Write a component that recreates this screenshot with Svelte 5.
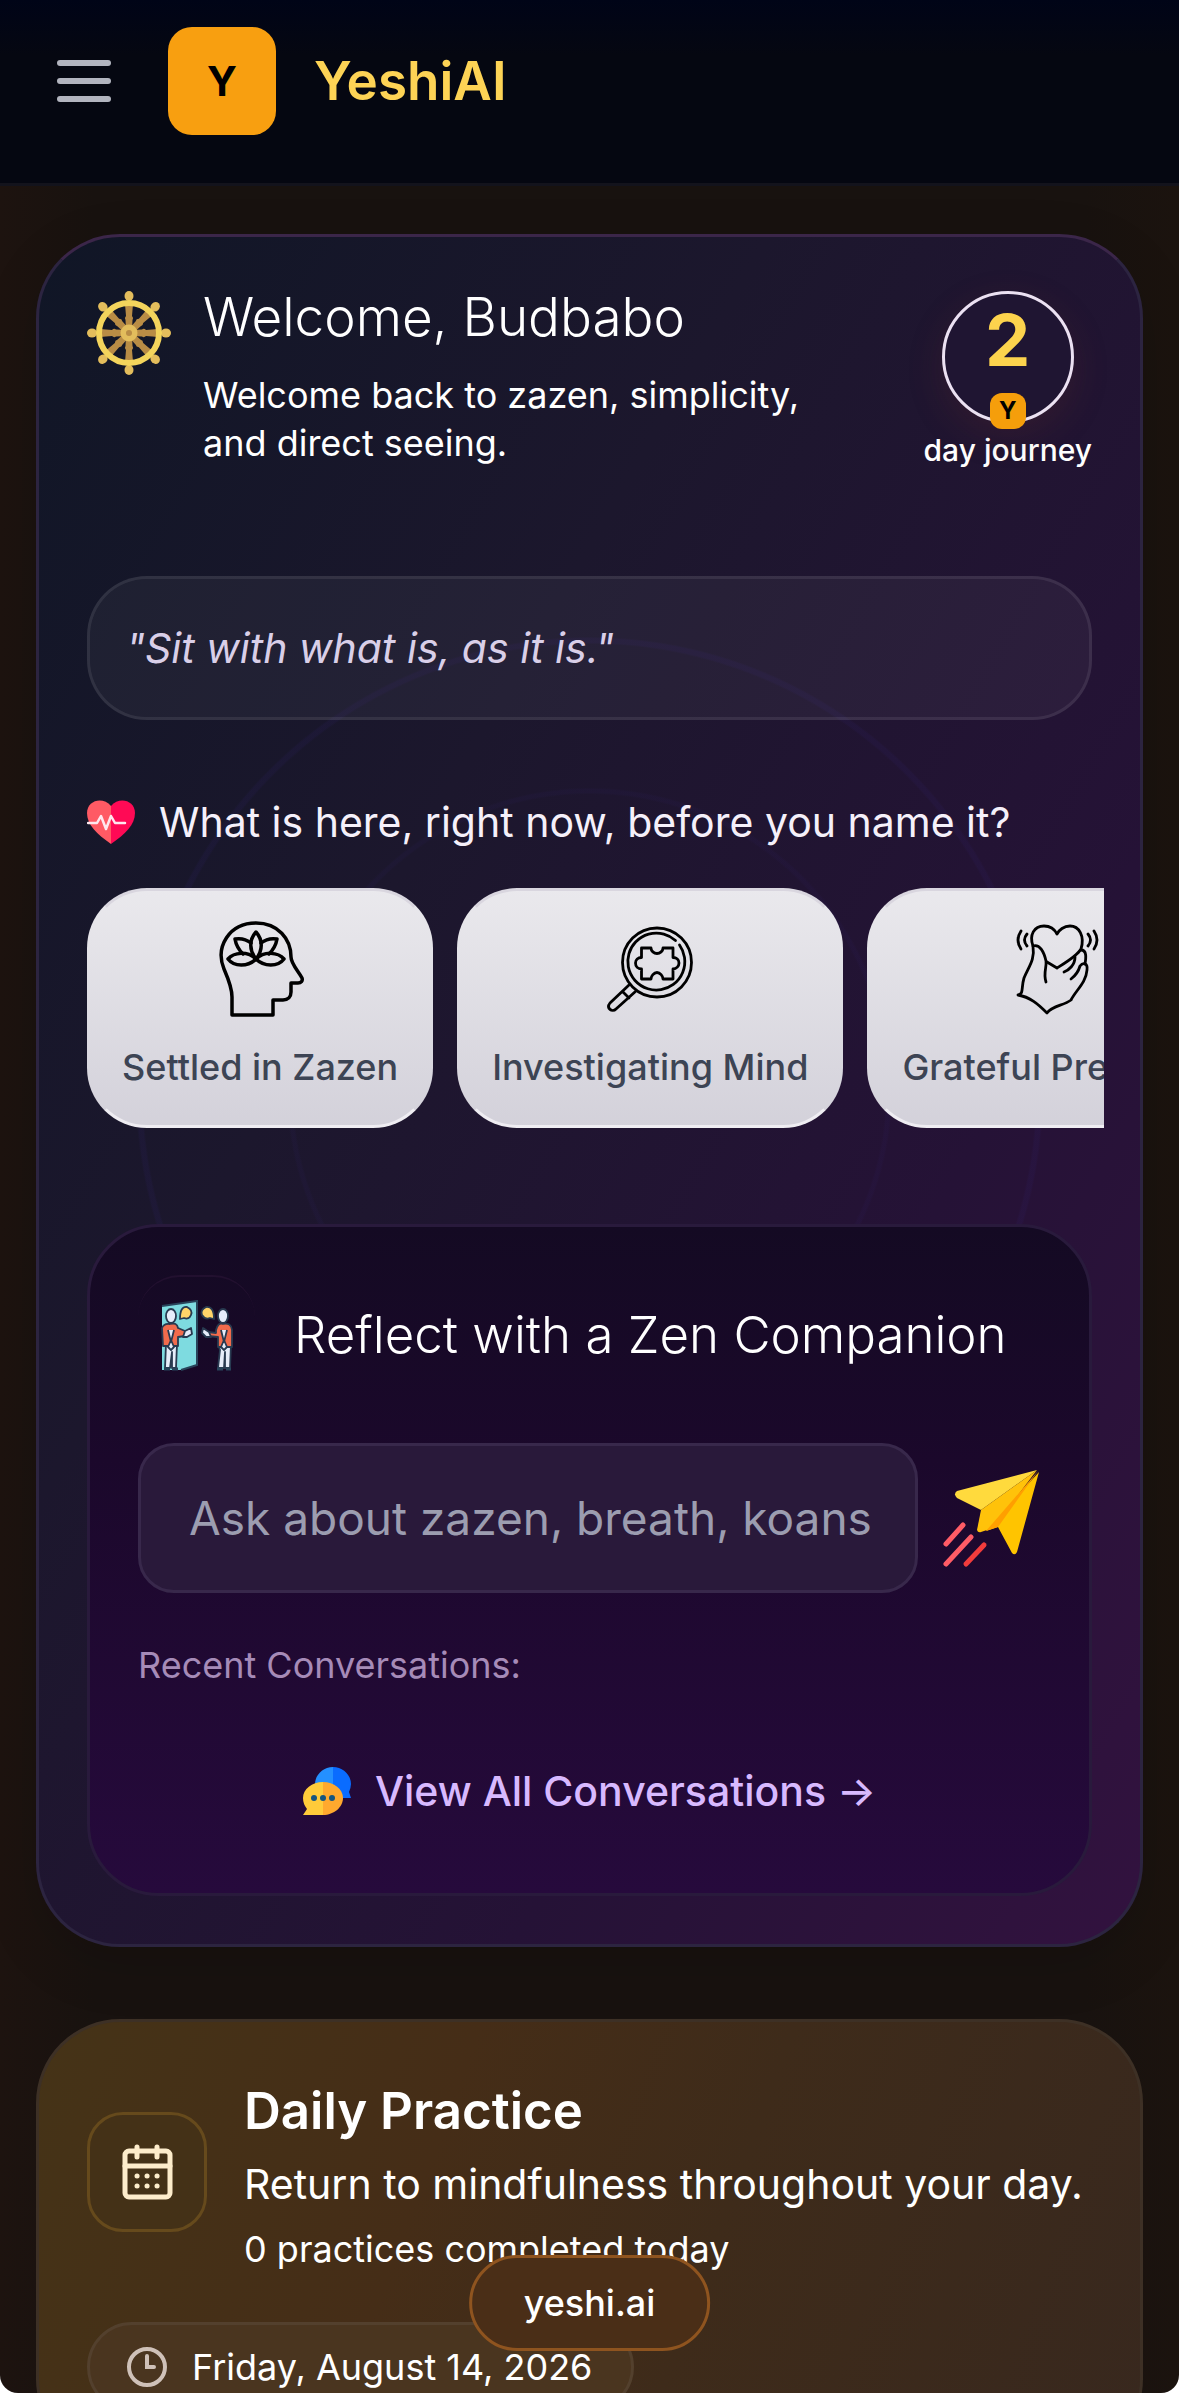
<script>
  let question = $state('');
  const spokes = [0, 45, 90, 135, 180, 225, 270, 315];
  const moods = [
    { label: 'Settled in Zazen', icon: 'head' },
    { label: 'Investigating Mind', icon: 'search' },
    { label: 'Grateful Presence', icon: 'heart' }
  ];
</script>

<div class="app">
  <header>
    <button class="menu" aria-label="Open menu"><span></span><span></span><span></span></button>
    <a class="brand" href="#home"><span class="logo">Y</span><span class="name">YeshiAI</span></a>
  </header>

  <main>
    <section class="card welcome">
      <div class="intro">
        <svg class="wheel" viewBox="0 0 84 84" aria-hidden="true">
          {#each spokes as angle}
            <g transform="rotate({angle} 42 42)">
              <path d="M39 39L38.500 29Q37 27 39 25L38 13H46L45 25Q47 27 45.500 29L45 39Z" fill="#b98c45" />
              <ellipse cx="42" cy="5" rx="4.500" ry="5" fill="#e3bd5c" />
            </g>
          {/each}
          <circle cx="42" cy="42" r="30" fill="none" stroke="#f3d45c" stroke-width="6" />
          <circle cx="42" cy="42" r="8.500" fill="#e3bd5c" />
          <circle cx="42" cy="42" r="3" fill="#b98c45" />
        </svg>
        <div class="greeting">
          <h1>Welcome, Budbabo</h1>
          <p>Welcome back to zazen, simplicity,<br />and direct seeing.</p>
        </div>
        <div class="journey">
          <div class="ring"><strong>2</strong><span class="badge">Y</span></div>
          <span class="days">day journey</span>
        </div>
      </div>

      <blockquote>"Sit with what is, as it is."</blockquote>

      <h2 class="ask">
        <svg viewBox="0 0 48 48" aria-hidden="true">
          <path d="M24 46C10 36 0 27 0 15C0 2 16-2 24 8Z" fill="#ff5a64" />
          <path d="M24 46C38 36 48 27 48 15C48 2 32-2 24 8Z" fill="#ff0a55" />
          <path d="M1 25H10L14 18L19 31L24 18L28 25H38" fill="none" stroke="#ffe8ee" stroke-width="2.500" stroke-linejoin="round" stroke-linecap="round" />
        </svg>
        What is here, right now, before you name it?
      </h2>

      <div class="moods">
        {#each moods as mood}
          <button class="mood">
            <svg viewBox="0 0 96 96" aria-hidden="true">
              {#if mood.icon === 'head'}
                <g stroke-width="3.500">
                  <path d="M20 94V76C20 66 15 55 12 48C3 26 17 2 44 2C66 2 79 18 79 36C79 43 87 51 90 57C91 60 89 62 86 62H79V71C79 76 76 79 71 79H61V94Z" />
                  <path d="M44 38C37 29 37 19 44 11C51 19 51 29 44 38Z" />
                  <path d="M39 22C34 18 29 17 23 18C24 24 27 29 31 33M49 22C54 18 59 17 65 18C64 24 61 29 57 33" />
                  <path d="M44 38C36 30 22 31 16 38C22 46 36 46 44 38ZM44 38C52 30 66 31 72 38C66 46 52 46 44 38Z" />
                </g>
              {:else if mood.icon === 'search'}
                <g stroke-width="2.800">
                  <circle cx="55" cy="41.500" r="34.500" />
                  <path d="M73.500 19.500A28.500 28.500 0 1 0 77.500 24" />
                  <path d="M39.500 27H49C49 30 52 32.500 55 32.500S61 30 61 27H71V36.500C74.500 36.500 77 39 77 42S74.500 48 71 48V58H61C61 55 58 51.500 55 51.500S49 55 49 58H39.500V48C36 48 33.500 45.500 33.500 42S36 36.500 39.500 36.500Z" />
                  <path d="M27 64L8 82C4 87 10 92 14 88L34 70M21 71L27 77" />
                </g>
              {:else}
                <g stroke-width="2.800">
                  <path d="M24 25C20 14 25 5 35 5C42 5 46 9 48 13C50 9 55 5 61 5C70 5 76 15 72 28C68 35 56 42 48 47L38 41" />
                  <path d="M37 61C34 52 38 46 37 40C35 31 31 23 24 25C26 39 20 45 15 57C12 67 15 73 9 74C21 76 29 83 38 92C44 84 54 85 62 79C67 69 77 62 78 49C79 42 74 41 71 45C69 52 66 55 62 58" />
                  <path d="M72 29C78 29 77 37 76 43M66 36C66 44 60 49 55 51" />
                  <path d="M12 10Q6 19 12 28M18 13Q13 19 18 25M79 13Q84 19 79 25M85 10Q91 19 85 28" />
                </g>
              {/if}
            </svg>
            {mood.label}
          </button>
        {/each}
      </div>

      <section class="companion">
        <div class="companion-head">
          <span class="tile">
            <svg viewBox="0 0 72 72" aria-hidden="true">
              <path d="M1 6L36 1V65L20 70H1Z" fill="#7edbe0" />
              <path d="M1 6L36 1V65L20 70" fill="none" stroke="#28435a" stroke-width="2" />
              <g stroke="#283a50" stroke-width="1.800" stroke-linejoin="round">
                <path d="M5 44H16L15 68H11V52L9 68H4Z" fill="#e6edfa" />
                <path d="M1 28Q3 23 9 24Q16 22 17 28L24 31V36L17 37V46H2Z" fill="#f16b4c" />
                <path d="M24 31L30 28L31 34L26 37H22Z" fill="#e6edfa" />
                <path d="M7 30L10 42L13 30M10 40L7 47L10 50L13 47Z" fill="#e6edfa" />
                <ellipse cx="10" cy="16" rx="5" ry="7" fill="#e6edfa" />
                <path d="M19 19Q19 6 26 7Q32 10 30 15Q28 20 23 18Z" fill="#ffd469" />
                <path d="M57 44H70L69 68H64V52L63 68H57L59 50Z" fill="#e6edfa" />
                <path d="M55 30Q57 22 62 24Q70 22 71 30V47H57V37L47 36V32L55 33Z" fill="#f16b4c" />
                <path d="M48 32L42 28L41 33L45 37H50Z" fill="#e6edfa" />
                <path d="M60 30L63 42L66 30M63 40L60 47L63 50L66 47Z" fill="#e6edfa" />
                <ellipse cx="62" cy="16" rx="5" ry="7" fill="#e6edfa" />
                <path d="M53 19Q53 6 45 7Q39 10 41 15Q44 20 49 18Z" fill="#ffd469" />
              </g>
              <path d="M3 69H9M11 69H17M56 69H62M65 69H70" stroke="#28435a" stroke-width="3" />
            </svg>
          </span>
          <h2>Reflect with a Zen Companion</h2>
        </div>

        <form class="prompt" onsubmit={(e) => e.preventDefault()}>
          <input type="text" aria-label="Your question" placeholder="Ask about zazen, breath, koans" bind:value={question} />
          <button aria-label="Send">
            <svg viewBox="0 0 99 99" aria-hidden="true">
              <path d="M95 1L15 22Q11 25 15 29L39 41Z" fill="#ffda3d" />
              <path d="M95 1L39 41L35 61Q36 64 39 63L51 59Z" fill="#ffc20a" />
              <path d="M97 3L44 62L56 58L70 84Q73 87 75 83Z" fill="#ffc400" />
              <path d="M96 2L44 62L56 58Z" fill="#ff9f00" />
              <g fill="none" stroke-width="5" stroke-linecap="round">
                <path d="M21 56L4 75M29 68L4 95" stroke="#ff5c66" /><path d="M42 76L24 95" stroke="#f23c3c" />
              </g>
            </svg>
          </button>
        </form>

        <p class="recent">Recent Conversations:</p>
        <a class="all" href="#conversations">
          <svg viewBox="0 0 48 48" aria-hidden="true">
            <path d="M30 0C40 0 48 8 48 17Q48 20 46 25L48 31H30Z" fill="#0a6cff" />
            <path d="M30 0C20 0 12 8 12 17V31H30Z" fill="#2490ff" />
            <path d="M20 15C31 15 40 22 40 31S31 48 20 48Z" fill="#ffa92e" />
            <path d="M20 15C9 15 0 22 0 31Q0 37 4 42L0 48H20Z" fill="#ffcb3a" />
            <g fill="#16557f"><circle cx="11" cy="31" r="3" /><circle cx="20" cy="31" r="3" /><circle cx="29" cy="31" r="3" /></g>
          </svg>
          View All Conversations →
        </a>
      </section>
    </section>

    <section class="card daily">
      <div class="daily-head">
        <span class="calendar">
          <svg viewBox="0 0 60 60" fill="none" stroke="#fdeccb" stroke-width="5" stroke-linecap="round" aria-hidden="true">
            <rect x="8" y="9" width="45" height="46" rx="4" />
            <path d="M8 24H53M20 5V15M40 5V15" />
            <path d="M20 34H20.100M30 34H30.100M40 34H40.100M20 44H20.100M30 44H30.100M40 44H40.100" />
          </svg>
        </span>
        <div class="summary">
          <h2>Daily Practice</h2>
          <p class="lead">Return to mindfulness throughout your day.</p>
          <p class="count">0 practices completed today</p>
        </div>
      </div>
      <div class="date">
        <svg viewBox="0 0 42 42" fill="none" stroke="#cfc1b8" stroke-width="4" stroke-linecap="round" aria-hidden="true">
          <circle cx="21" cy="21" r="18" /><path d="M21 10V21H28" />
        </svg>
        Friday, August 14, 2026
      </div>
    </section>
  </main>

  <a class="site" href="#site">yeshi.ai</a>
</div>

<style>
  :global(body) { margin: 0; background: #fff; }
  .app, .app * { box-sizing: border-box; }
  .app {
    height: 100vh;
    display: flex;
    flex-direction: column;
    overflow: hidden;
    border-radius: 0 0 18px 18px;
    background: linear-gradient(90deg, #1d130f, #18120f 8%, #18120f 92%, #1b130e);
    color: #fff;
    font-family: Inter, "Liberation Sans", sans-serif;
    font-size: 36px;
    line-height: 48px;
  }
  h1, h2, p, blockquote { margin: 0; font-weight: 400; }
  button { border: 0; padding: 0; background: none; font: inherit; color: inherit; cursor: pointer; }
  a { color: inherit; text-decoration: none; }
  svg { display: block; flex: none; }

  header {
    flex: none;
    display: flex;
    align-items: center;
    gap: 57px;
    padding: 27px 57px 48px;
    border-bottom: 3px solid #13131c;
    background: linear-gradient(#000417, #050711 30%);
  }
  .menu { display: grid; gap: 12px; width: 54px; }
  .menu span { height: 6px; border-radius: 3px; background: #b2b4bf; }
  .brand { display: flex; align-items: center; gap: 38px; }
  .logo {
    display: grid; place-items: center;
    width: 108px; height: 108px; border-radius: 24px;
    background: #f89f10; color: #000; font-size: 41px; font-weight: 700;
  }
  .name { color: #fdd355; font-size: 53px; font-weight: 600; }

  main {
    flex: 1; min-height: 0; overflow: hidden;
    display: flex; flex-direction: column; gap: 72px;
    padding: 48px 36px 0;
  }
  .card { flex: none; padding: 48px; border: 3px solid #2c2440; border-radius: 84px; }
  .welcome {
    border-top-color: #3b2649;
    background:
      radial-gradient(circle at center, transparent 296px, rgba(48, 34, 110, .1) 298px 301px, transparent 303px),
      radial-gradient(circle at center, transparent 446px, rgba(48, 34, 110, .15) 448px 452px, transparent 454px),
      linear-gradient(120deg, #101626, #1c172d 35%, #251236 70%, #32123f);
    box-shadow: 0 18px 60px rgba(0, 0, 0, .12);
  }
  .intro { display: flex; align-items: flex-start; gap: 32px; padding-top: 6px; }
  .wheel { width: 84px; height: 84px; }
  .greeting { flex: 1; }
  h1 { margin: -7px 0 21px; font-size: 53px; line-height: 66px; font-weight: 300; }
  .journey { display: flex; flex-direction: column; align-items: center; gap: 9px; }
  .ring {
    position: relative; display: flex; justify-content: center;
    width: 132px; height: 132px; padding-top: 10px;
    border: 3px solid #ebe1f2; border-radius: 50%; background: #1f1532;
    box-shadow: 0 12px 36px rgba(120, 50, 40, .2);
  }
  .ring strong { font-size: 72px; line-height: 72px; color: #fcd34d; }
  .badge {
    position: absolute; bottom: -9px; left: 45px;
    display: grid; place-items: center; width: 36px; height: 36px;
    border-radius: 12px; background: #f59e0b; color: #000;
    font-size: 24px; line-height: 36px; font-weight: 700;
  }
  .days { font-size: 30px; line-height: 36px; font-weight: 500; }

  blockquote {
    margin-top: 108px; padding: 45px 36px;
    border: 3px solid rgba(255, 255, 255, .08); border-radius: 60px;
    background: rgba(255, 255, 255, .045);
    color: #d9cfe8; font-size: 41px; font-style: italic;
  }
  .ask {
    display: flex; align-items: center; gap: 24px; margin-top: 78px;
    color: #f5f0fa; font-size: 41px; line-height: 48px;
  }
  .ask svg { width: 48px; height: 48px; }
  .moods { display: flex; gap: 24px; margin: 42px -12px 0 0; overflow: hidden; }
  .mood {
    flex: none; display: flex; flex-direction: column; align-items: center; gap: 26px;
    padding: 30px 32px 34px; border: 3px solid transparent;
    border-top-color: #d9d6df; border-bottom-color: #efedf2; border-radius: 60px;
    background: linear-gradient(#eae9ed, #d3d1da) border-box;
    color: #3d4454; font-weight: 500; white-space: nowrap;
  }
  .mood svg { width: 96px; height: 96px; fill: none; stroke: #000; stroke-linejoin: round; stroke-linecap: round; }

  .companion {
    margin-top: 96px; padding: 48px; border: 3px solid #291a3c; border-radius: 72px;
    background: linear-gradient(#140a23, #1b082b 35%, #260a3c);
  }
  .companion-head { display: flex; align-items: center; gap: 39px; }
  .tile {
    display: grid; place-items: center; width: 117px; height: 120px;
    border-top: 2px solid #22102f; border-radius: 42px;
  }
  .tile svg { width: 72px; height: 72px; }
  .companion h2 { font-size: 51px; line-height: 66px; font-weight: 300; }
  .prompt { display: flex; align-items: center; gap: 24px; margin-top: 48px; }
  .prompt input {
    flex: 1; min-width: 0; height: 150px; padding: 0 36px 0 48px;
    border: 3px solid #38284b; border-radius: 36px; background: #29193a;
    color: #fff; font: inherit; font-size: 46px; outline: 0;
  }
  .prompt input::placeholder { color: #9c9db0; opacity: 1; }
  .prompt svg { width: 99px; height: 99px; }
  .recent { margin-top: 48px; color: #a68bb8; }
  .all {
    display: flex; align-items: center; justify-content: center; gap: 24px;
    margin-top: 78px; padding-bottom: 30px;
    color: #d8b9ff; font-size: 41px; font-weight: 500;
  }
  .all svg { width: 48px; height: 48px; }

  .daily {
    border-color: #3d3025;
    background: linear-gradient(110deg, #453317, #452d17 35%, #3e2b1a 60%, #38281e);
  }
  .daily-head { display: flex; align-items: flex-start; gap: 37px; }
  .calendar {
    display: grid; place-items: center; width: 120px; height: 120px; margin-top: 42px;
    border: 3px solid #664a1c; border-radius: 36px; background: #443117;
  }
  .calendar svg { width: 60px; height: 60px; }
  .summary { padding-top: 2px; }
  .daily h2 { font-size: 51px; line-height: 78px; font-weight: 600; }
  .lead { font-size: 41px; line-height: 68px; }
  .count { line-height: 62px; }
  .date {
    display: inline-flex; align-items: center; gap: 24px;
    margin-top: 42px; padding: 18px 39px 18px 36px;
    border: 3px solid #53402d; border-radius: 60px; background: #4a351f;
  }
  .date svg { width: 42px; height: 42px; }

  .site {
    position: fixed; left: 50%; bottom: 42px; transform: translateX(-50%);
    padding: 21px 52px; border: 3px solid #8f541f; border-radius: 48px;
    background: #4a2e17; font-weight: 500;
  }
</style>
